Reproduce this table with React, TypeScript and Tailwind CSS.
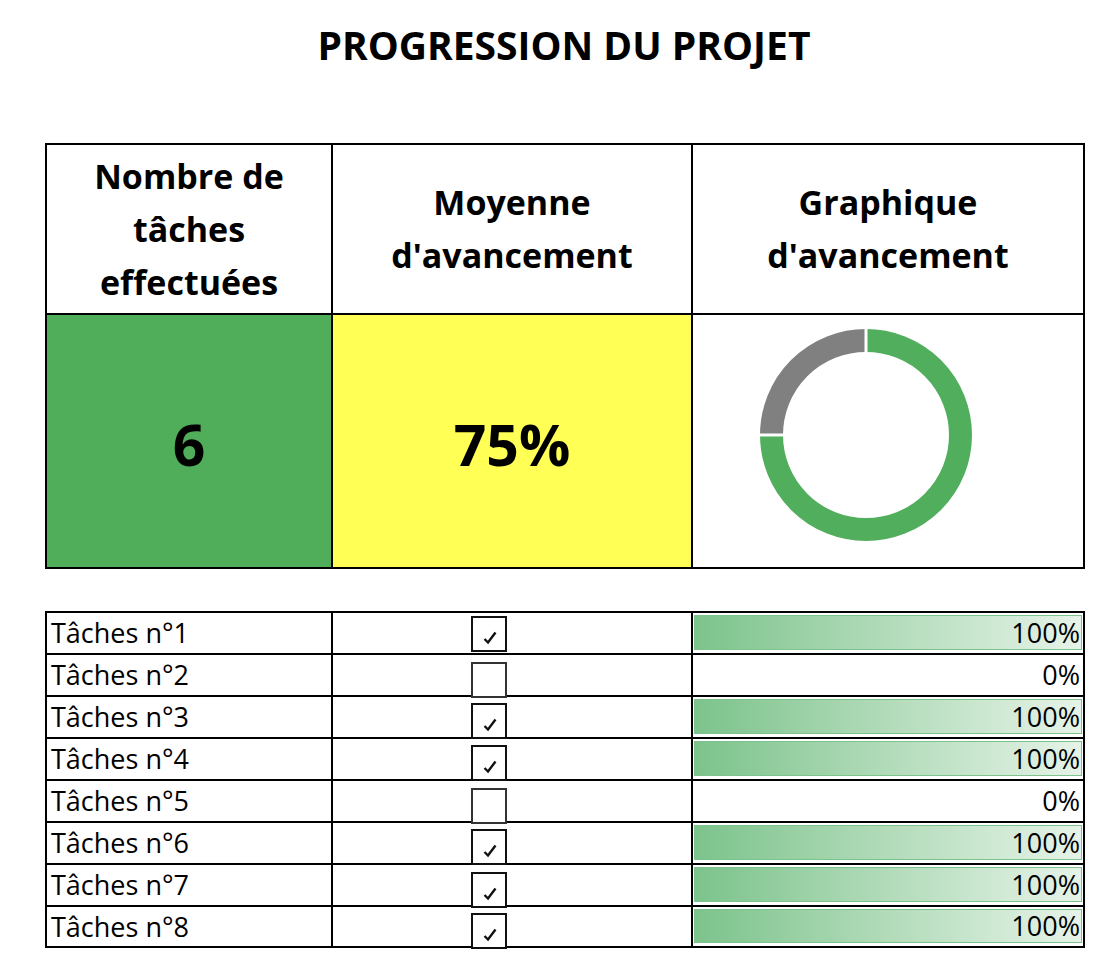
import React from "react";

type Task = { label: string; done: boolean; boxTop: number };

const tasks: Task[] = [
  { label: "Tâches n°1", done: true, boxTop: 3 },
  { label: "Tâches n°2", done: false, boxTop: 7 },
  { label: "Tâches n°3", done: true, boxTop: 6 },
  { label: "Tâches n°4", done: true, boxTop: 6 },
  { label: "Tâches n°5", done: false, boxTop: 7 },
  { label: "Tâches n°6", done: true, boxTop: 6 },
  { label: "Tâches n°7", done: true, boxTop: 7 },
  { label: "Tâches n°8", done: true, boxTop: 6 },
];

function Donut() {
  // 75% green from 12 o'clock clockwise, 25% grey in the top-left quadrant
  return (
    <svg width="212" height="212" viewBox="0 0 212 212">
      <path d="M106 11.5 A94.5 94.5 0 1 1 11.5 106" fill="none" stroke="#51ae5d" strokeWidth="23" />
      <path d="M11.5 106 A94.5 94.5 0 0 1 106 11.5" fill="none" stroke="#808080" strokeWidth="23" />
      <line x1="106" y1="0" x2="106" y2="25" stroke="#fff" strokeWidth="3" />
      <line x1="0" y1="106" x2="25" y2="106" stroke="#fff" strokeWidth="3" />
    </svg>
  );
}

function CheckBox({ checked, top }: { checked: boolean; top: number }) {
  return (
    <div
      className={`relative ml-[138px] h-[36px] w-[36px] border-2 bg-white ${checked ? "border-[#111]" : "border-[#333]"}`}
      style={{ marginTop: top }}
    >
      {checked && (
        <svg className="absolute left-[10px] top-[13px]" width="15" height="14" viewBox="0 0 15 14">
          <path d="M1.5 8 L5 11.5 L12.5 1.5" fill="none" stroke="#111" strokeWidth="2.4" />
        </svg>
      )}
    </div>
  );
}

export default function App() {
  return (
    <div className="h-[978px] w-[1106px] bg-white text-black" style={{ fontFamily: '"Open Sans", "Noto Sans", sans-serif' }}>
      <h1 className="pl-[22px] pt-[25px] text-center text-[39px] font-bold leading-[39px]">PROGRESSION DU PROJET</h1>

      {/* Summary */}
      <div className="ml-[45px] mt-[79px] grid w-[1040px] grid-cols-[286px_360px_392px] border-l-2 border-t-2 border-black">
        <div className="flex h-[170px] flex-col items-center justify-center border-b-2 border-r-2 border-black text-[34px] font-bold leading-[53px]">
          <span>Nombre de</span>
          <span>tâches</span>
          <span>effectuées</span>
        </div>
        <div className="flex h-[170px] flex-col items-center justify-center border-b-2 border-r-2 border-black text-[34px] font-bold leading-[53px]">
          <span>Moyenne</span>
          <span>d'avancement</span>
        </div>
        <div className="flex h-[170px] flex-col items-center justify-center border-b-2 border-r-2 border-black text-[34px] font-bold leading-[53px]">
          <span>Graphique</span>
          <span>d'avancement</span>
        </div>

        <div className="flex h-[254px] items-center justify-center border-b-2 border-r-2 border-black bg-[#50ae5b] pt-[8px] text-[57px] font-bold">
          6
        </div>
        <div className="flex h-[254px] items-center justify-center border-b-2 border-r-2 border-black bg-[#ffff55] pt-[8px] text-[57px] font-bold">
          75%
        </div>
        <div className="h-[254px] border-b-2 border-r-2 border-black pl-[67px] pt-[14px]">
          <Donut />
        </div>
      </div>

      {/* Tasks */}
      <div className="ml-[45px] mt-[42px] grid w-[1040px] grid-cols-[286px_360px_392px] border-l-2 border-t-2 border-black text-[27px]">
        {tasks.map((t, i) => {
          const h = i === tasks.length - 1 ? "h-[41px]" : "h-[42px]";
          return (
            <React.Fragment key={t.label}>
              <div className={`flex ${h} items-center border-b-2 border-r-2 border-black pl-[4px] leading-[40px]`}>
                {t.label}
              </div>
              <div className={`relative ${h} border-b-2 border-r-2 border-black`}>
                <div className="absolute left-0 top-0 z-10">
                  <CheckBox checked={t.done} top={t.boxTop} />
                </div>
              </div>
              <div className={`flex ${h} border-b-2 border-r-2 border-black px-[1px] pb-[3px] pt-[2px]`}>
                {t.done ? (
                  <div className="flex flex-1 items-center justify-end border border-[#7cc38c] bg-gradient-to-r from-[#7cc38c] to-[#e6f3e8] pr-[1px] leading-[34px]">
                    100%
                  </div>
                ) : (
                  <div className="flex flex-1 items-center justify-end pr-[2px] leading-[34px]">0%</div>
                )}
              </div>
            </React.Fragment>
          );
        })}
      </div>
    </div>
  );
}
